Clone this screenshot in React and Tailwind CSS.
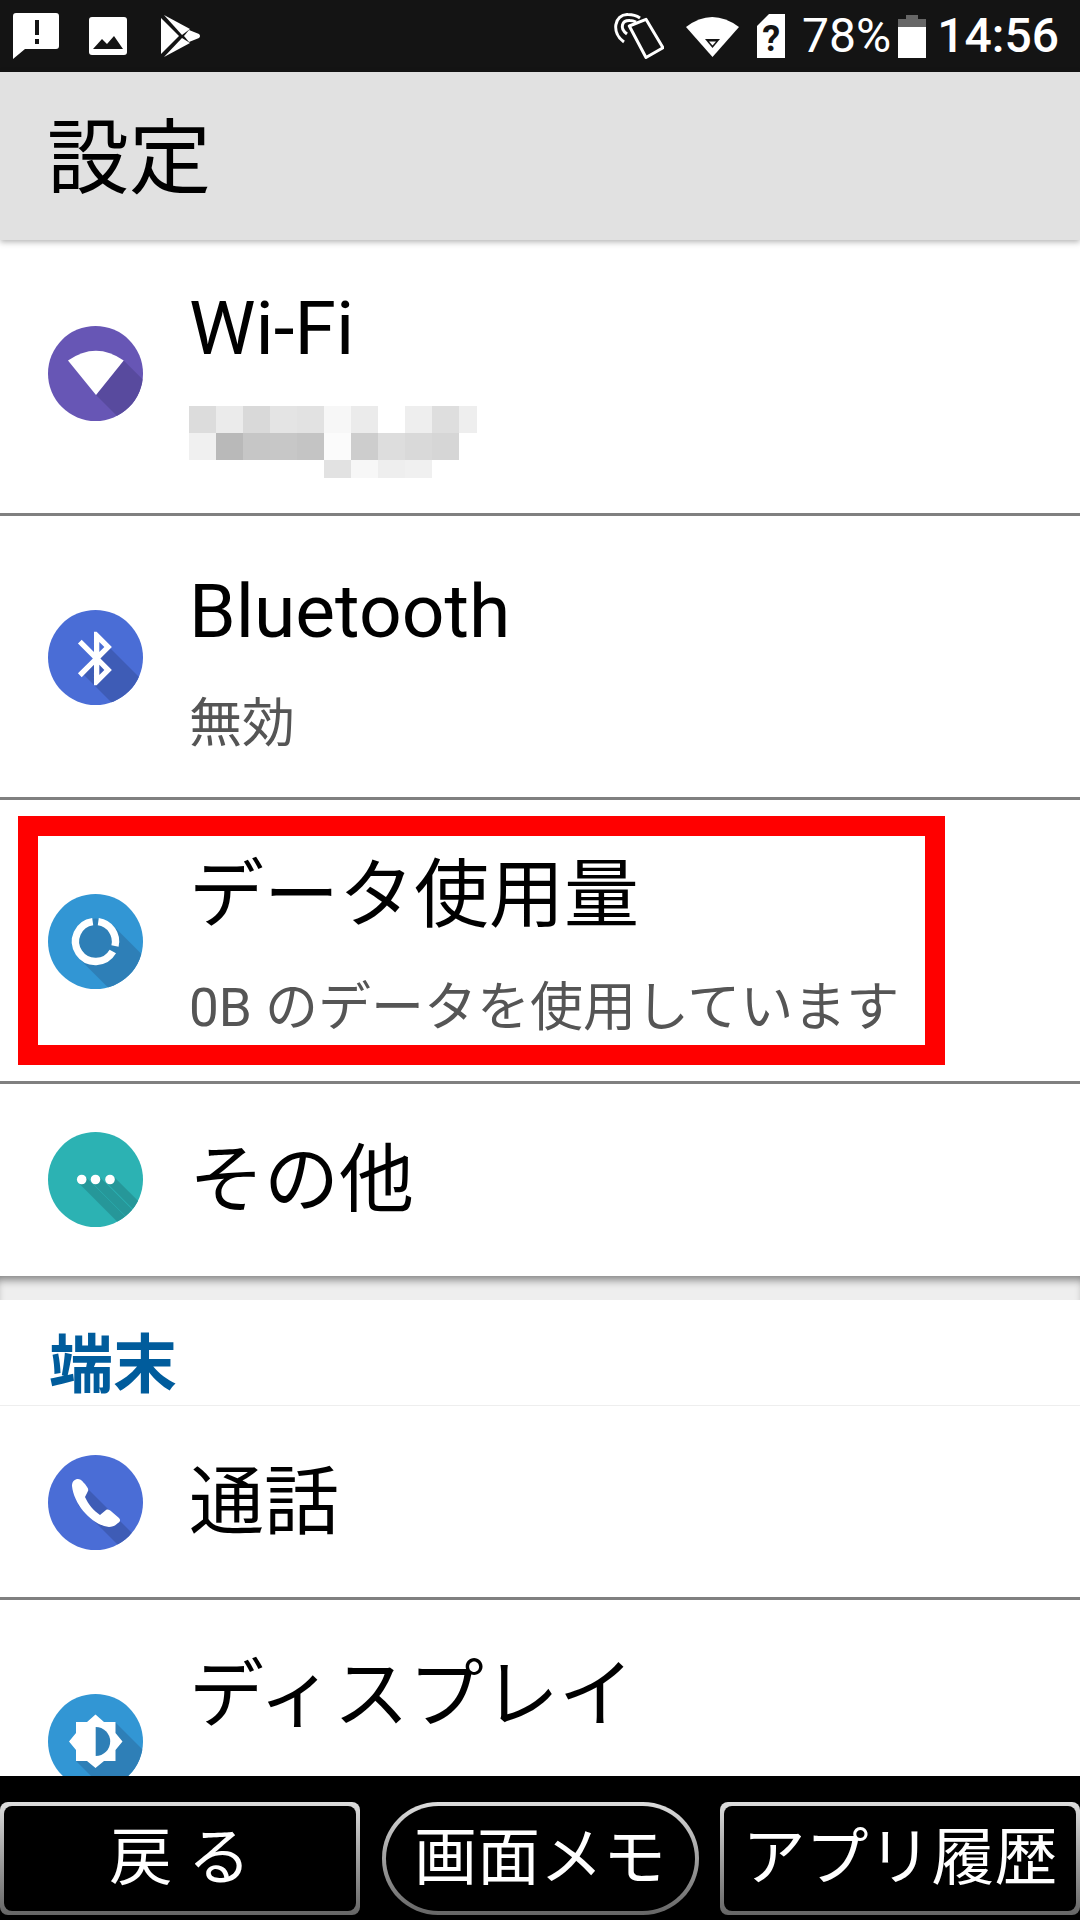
const sans = "font-['Roboto','Noto_Sans_CJK_JP',sans-serif]";

function Badge({ bg, children }) {
  return (
    <svg width="95" height="95" viewBox="0 0 95 95" className="shrink-0">
      <defs>
        <clipPath id={"clip" + bg.slice(1)}>
          <circle cx="47.5" cy="47.5" r="47.5" />
        </clipPath>
      </defs>
      <circle cx="47.5" cy="47.5" r="47.5" fill={bg} />
      <g clipPath={"url(#clip" + bg.slice(1) + ")"}>{children}</g>
    </svg>
  );
}

function WifiBadge() {
  return (
    <Badge bg="#6756b5">
      <polygon points="75.7,34.5 48,69 98,119 125.7,84.5" fill="#584a9e" />
      <path d="M20 34.5 Q48 15 75.7 34.5 L48 69 Z" fill="#fff" />
    </Badge>
  );
}

function BluetoothBadge() {
  return (
    <Badge bg="#4a6dd6">
      <polygon points="62,38 112,88 96,125 46,75 34,63 46,50" fill="#3e5cb6" />
      <path
        transform="translate(16.6 16.4) scale(2.67)"
        fill="#fff"
        d="M17.71 7.71L12 2h-1v7.59L6.41 5 5 6.41 10.59 12 5 17.59 6.41 19 11 14.41V22h1l5.71-5.71-4.3-4.29 4.3-4.29zM13 5.83l1.88 1.88L13 9.59V5.83zm1.88 10.46L13 18.17v-3.76l1.88 1.88z"
      />
    </Badge>
  );
}

function DataBadge() {
  return (
    <Badge bg="#3296d4">
      <polygon points="64.26,30.74 30.74,64.26 90.74,124.26 124.26,90.74" fill="#2e7fb7" />
      <circle cx="47.5" cy="47.5" r="23" fill="#2e7fb7" />
      <g fill="none" stroke="#fff" strokeWidth="7.4">
        <path d="M50.28 27.7 A20 20 0 0 1 66.99 52" />
        <path d="M64.82 57.5 A20 20 0 1 1 44.72 27.7" />
      </g>
    </Badge>
  );
}

function OtherBadge() {
  return (
    <Badge bg="#2cb2b3">
      <g stroke="#269799" strokeWidth="9.4">
        <line x1="33.7" y1="47.5" x2="93.7" y2="107.5" />
        <line x1="47.5" y1="47.5" x2="107.5" y2="107.5" />
        <line x1="62" y1="47.5" x2="122" y2="107.5" />
      </g>
      <circle cx="33.7" cy="47.5" r="4.8" fill="#fff" />
      <circle cx="47.5" cy="47.5" r="4.8" fill="#fff" />
      <circle cx="62" cy="47.5" r="4.8" fill="#fff" />
    </Badge>
  );
}

function PhoneBadge() {
  return (
    <Badge bg="#4a6dd6">
      <polygon points="40,34 100,94 80,100 45,65 30,50" fill="#3e5cb6" />
      <path
        fill="#fff"
        d="M24 31 C24 26 27 24 30 24 C33 24 35 27 37 29 C39 32 41 34 40 36 L37 42 C40 49 46 56 52 60 L58 55 C60 54 62 55 64 57 L71 63 C73 65 72 67 70 68 C67 71 64 72 61 72 C44 70 26 50 24 31 Z"
      />
    </Badge>
  );
}

function DisplayBadge() {
  return (
    <Badge bg="#3296d4">
      <polygon points="67,28 28,67 88,127 127,88" fill="#2e7fb7" />
      <path
        fill="#fff"
        d="M47.5 20.5 L56 28 H67.5 V39 L74.5 47.5 L67.5 56 V67 H56 L47.5 74 L39 67 H28 V56 L21 47.5 L28 39 V28 H39 Z"
      />
      <path d="M47.7 33 A14.5 14.5 0 0 1 47.7 62 Z" fill="#2e7fb7" />
    </Badge>
  );
}

function Divider() {
  return <div className="h-[3px] bg-[#808080]" />;
}

function Row({ icon, iconClass, title, sub, height, children }) {
  return (
    <div className={"flex items-center pl-[48px] " + height}>
      <div className={iconClass}>{icon}</div>
      <div className="ml-[46px] flex flex-col">
        {(sub || children) && <div className="h-[10px]" />}
        <div className="text-[75px] leading-[84px] text-black">{title}</div>
        {sub && <div className="mt-[41px] text-[53px] leading-[60px] text-[#555]">{sub}</div>}
        {children}
      </div>
    </div>
  );
}

const blurRows = [
  ["w-[27px] bg-[#dcdcdc]", "w-[27px] bg-[#ebebeb]", "w-[27px] bg-[#d9d9d9]", "w-[27px] bg-[#e4e4e4]", "w-[27px] bg-[#e2e2e2]", "w-[27px] bg-[#f7f7f7]", "w-[27px] bg-[#ebebeb]", "w-[27px] bg-white", "w-[27px] bg-[#eeeeee]", "w-[27px] bg-[#dedede]", "w-[18px] bg-[#eeeeee]"],
  ["w-[27px] bg-[#f0f0f0]", "w-[27px] bg-[#b9b9b9]", "w-[27px] bg-[#c6c6c6]", "w-[27px] bg-[#c7c7c7]", "w-[27px] bg-[#c4c4c4]", "w-[27px] bg-[#fbfbfb]", "w-[27px] bg-[#cdcdcd]", "w-[27px] bg-[#dddddd]", "w-[27px] bg-[#d9d9d9]", "w-[27px] bg-[#d6d6d6]"],
  ["w-[135px] bg-white", "w-[27px] bg-[#e2e2e2]", "w-[27px] bg-[#f7f7f7]", "w-[27px] bg-[#eeeeee]", "w-[27px] bg-[#f0f0f0]"],
];

function BlurredName() {
  return (
    <div className="mt-[36px] flex flex-col">
      {blurRows.map((cells, i) => (
        <div key={i} className={"flex " + (i === 2 ? "h-[18px]" : "h-[27px]")}>
          {cells.map((c, j) => (
            <div key={j} className={c} />
          ))}
        </div>
      ))}
    </div>
  );
}

function StatusBar() {
  return (
    <div className="flex h-[72px] shrink-0 items-center justify-between bg-[#141414] text-white">
      <div className="flex items-center pl-[13px]">
        <svg width="46" height="46" viewBox="0 0 46 46">
          <path d="M3 0 H43 Q46 0 46 3 V33 Q46 36 43 36 H12 L0 46 V3 Q0 0 3 0 Z" fill="#fff" />
          <rect x="22" y="7" width="4" height="15" fill="#141414" />
          <rect x="22" y="26" width="4" height="5" fill="#141414" />
        </svg>
        <svg width="38" height="38" viewBox="0 0 38 38" className="ml-[30px]">
          <rect width="38" height="38" rx="3" fill="#fff" />
          <path d="M4 32 L13 22 L18 27 L25 19 L34 32 Z" fill="#141414" />
        </svg>
        <svg width="40" height="42" viewBox="0 0 40 42" className="ml-[34px]">
          <path d="M0 3 L18 21 L0 39 Z" fill="#fff" />
          <path d="M3 0 L29 14 L21 20 Z" fill="#fff" />
          <path d="M3 42 L29 28 L21 23 Z" fill="#fff" />
          <path d="M28 15 L38 19 Q40 21 38 23 L28 27 L23 21 Z" fill="#fff" />
        </svg>
      </div>
      <div className="flex items-center pr-[21px]">
        <svg width="50" height="46" viewBox="0 0 50 46" fill="none" stroke="#fff" strokeWidth="3" strokeLinejoin="round">
          <polygon points="15.3,13 32,6.3 49,34.7 32,44.5" />
          <path d="M10 29 C-3 20 0 1 14 1.5 C19 1.5 23 3 26 5" />
          <path d="M13 21 C5 15 8 7 16 7.5 C18 7.5 20 8 22 9" />
        </svg>
        <svg width="53" height="42" viewBox="0 0 53 42" className="ml-[22px]">
          <path d="M0 12 Q26 -8 53 12 L26.5 42 Z" fill="#fff" />
          <path d="M19 24 H34 L26.5 33 Z" fill="#141414" />
          <path d="M23 26.5 H30 L26.5 30.5 Z" fill="#fff" />
        </svg>
        <div className="relative ml-[18px] h-[44px] w-[28px]">
          <svg width="28" height="44" viewBox="0 0 28 44" className="block">
            <path d="M12 0 H28 V44 H0 V12 Z" fill="#fff" />
          </svg>
          <span className="absolute inset-0 flex items-center justify-center pt-[6px] font-['Roboto',sans-serif] text-[36px] font-bold leading-none text-[#141414]">
            ?
          </span>
        </div>
        <span className="ml-[17px] font-['Roboto',sans-serif] text-[48px] leading-none">78%</span>
        <svg width="28" height="43" viewBox="0 0 28 43" className="ml-[7px]">
          <path d="M8 0 H20 V4 H28 V12 H0 V4 H8 Z" fill="#666" />
          <rect y="12" width="28" height="31" fill="#fff" />
        </svg>
        <span className="ml-[11px] font-['Roboto',sans-serif] text-[48px] font-medium leading-none">14:56</span>
      </div>
    </div>
  );
}

function NavButton({ label, className }) {
  return (
    <div className={"bg-gradient-to-b from-[#dddddd] to-[#666666] p-[4px] " + className}>
      <div className="flex h-full items-center justify-center bg-black text-[63px] text-white [border-radius:inherit]">
        {label}
      </div>
    </div>
  );
}

export default function App() {
  return (
    <div className={"relative flex h-[1920px] w-[1080px] flex-col overflow-hidden bg-white " + sans}>
      <StatusBar />
      <div className="relative z-10 flex h-[168px] shrink-0 items-center bg-[#e1e1e1] pl-[47px] pt-[6px] text-[82px] text-black shadow-[0_2px_6px_rgba(0,0,0,0.3)]">
        設定
      </div>

      <div className="min-h-0 flex-1 overflow-hidden">
        <Row icon={<WifiBadge />} iconClass="mb-[6px]" title="Wi-Fi" height="h-[273px]">
          <BlurredName />
        </Row>
        <Divider />
        <Row icon={<BluetoothBadge />} iconClass="mt-[2px]" title="Bluetooth" sub="無効" height="h-[281px]" />
        <Divider />
        <div className="relative">
          <Row icon={<DataBadge />} iconClass="mt-[2px]" title="データ使用量" sub="0B のデータを使用しています" height="h-[281px]" />
          <div className="absolute left-[18px] top-[16px] h-[249px] w-[927px] border-[20px] border-[#ff0000]" />
        </div>
        <Divider />
        <Row icon={<OtherBadge />} iconClass="mb-[2px]" title="その他" height="h-[192px]" />

        <div className="h-[24px] bg-[#eeeeee] shadow-[inset_0_8px_8px_-4px_rgba(0,0,0,0.45)]" />

        <div className="flex h-[106px] items-center border-b border-[#eeeeee] pl-[49px] pt-[27px] text-[64px] font-bold text-[#005c9c]">
          端末
        </div>
        <Row icon={<PhoneBadge />} iconClass="mt-[2px]" title="通話" height="h-[191px]" />
        <Divider />
        <Row icon={<DisplayBadge />} iconClass="mt-[2px]" title="ディスプレイ" height="h-[281px]">
          <div className="mt-[41px] h-[60px]" />
        </Row>
      </div>

      <div className="flex h-[144px] shrink-0 items-end justify-between bg-black pb-[5px]">
        <NavButton label="戻 る" className="h-[113px] w-[360px] rounded-[8px]" />
        <NavButton label="画面メモ" className="h-[113px] w-[317px] rounded-[56px]" />
        <NavButton label="アプリ履歴" className="h-[113px] w-[360px] rounded-[8px]" />
      </div>
    </div>
  );
}
